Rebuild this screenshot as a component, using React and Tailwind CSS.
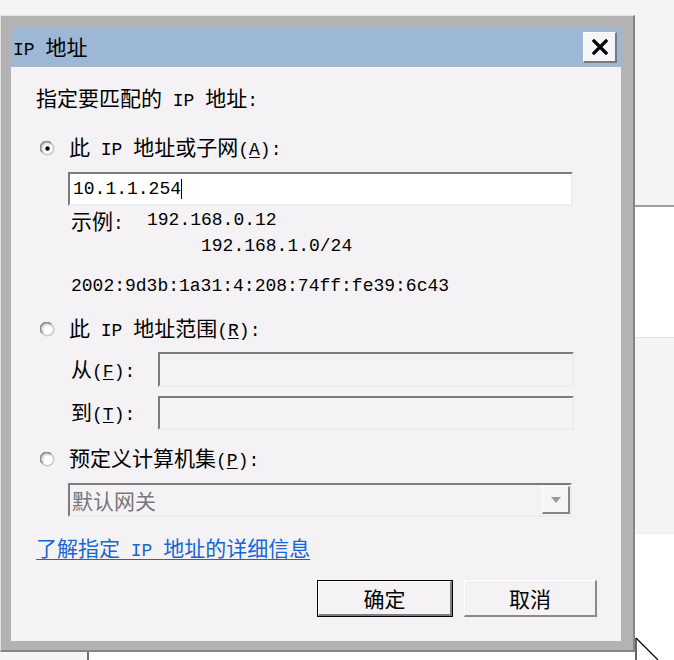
import React from "react";

const isCJK = (ch) => /[\u3000-\u9fff\uff00-\uffef]/.test(ch);

// split a string into CJK / latin runs so each gets the right face and size
const Txt = ({ children }) => {
  const runs = [];
  for (const ch of String(children)) {
    const cjk = isCJK(ch);
    const last = runs[runs.length - 1];
    if (last && last.cjk === cjk) last.s += ch;
    else runs.push({ cjk, s: ch });
  }
  return (
    <>
      {runs.map((r, i) =>
        r.cjk ? (
          <span key={i} className="font-['Noto_Sans_CJK_SC',sans-serif] text-[21px]">
            {r.s}
          </span>
        ) : (
          <span key={i} className="font-['Liberation_Mono',monospace] text-[18px] whitespace-pre">
            {r.s}
          </span>
        )
      )}
    </>
  );
};

const Label = ({ text, k }) => (
  <span className="leading-[24px] text-black">
    <Txt>{text + "("}</Txt>
    <span className="underline underline-offset-2 font-['Liberation_Mono',monospace] text-[18px]">{k}</span>
    <Txt>{"):"}</Txt>
  </span>
);

const Radio = ({ checked }) => (
  <svg width="15" height="15" viewBox="0 0 15 15" className="shrink-0">
    <circle cx="7.5" cy="7.5" r="6.2" fill="#ffffff" stroke="#c9c9c9" strokeWidth="1.6" />
    <path d="M2.2 11.2 A6.2 6.2 0 0 1 11.2 2.2" fill="none" stroke="#8f8f8f" strokeWidth="1.6" />
    <path d="M3.6 10 A4.6 4.6 0 0 1 10 3.6" fill="none" stroke="#d6d6d6" strokeWidth="1" />
    {checked && <circle cx="7.5" cy="7.5" r="2.2" fill="#000000" />}
  </svg>
);

const RadioRow = ({ checked, text, k }) => (
  <div className="flex items-center h-[24px]">
    <div className="ml-[4px] mr-[14px] flex">
      <Radio checked={checked} />
    </div>
    <Label text={text} k={k} />
  </div>
);

const sunken =
  "border-2 border-t-[#7c7c7c] border-l-[#7c7c7c] border-r-[#ededed] border-b-[#ededed]";

export default function App() {
  return (
    <div className="relative w-[674px] h-[660px] overflow-hidden bg-[#f6f3f6]">
      {/* windows behind the dialog */}
      <div className="flex flex-col h-full">
        <div className="flex h-[652px]">
          <div className="w-[635px]"></div>
          <div className="flex-1 flex flex-col">
            <div className="h-[205px]"></div>
            <div className="h-[132px] bg-white border-t-2 border-t-[#9c9c9c]"></div>
            <div className="h-[196px] border-t border-t-[#e4e4e4]"></div>
            <div className="flex-1 bg-white border-t border-t-[#ececec]"></div>
          </div>
        </div>
        <div className="flex flex-1">
          <div className="w-[87px]"></div>
          <div className="flex-1 bg-white border-l-2 border-l-[#6f6f6f]"></div>
        </div>
      </div>

      {/* dialog */}
      <div className="absolute left-0 top-[15px] w-[635px] h-[637px] flex flex-col bg-[#b3b3b3] border-t border-t-[#e6e6e6] border-l border-l-[#e2e2e2] border-r-2 border-r-[#858585] border-b-2 border-b-[#858585] pt-[12px] pl-[10px] pr-[12px] pb-[9px]">
        <div className="h-[39px] bg-[#9db7d6] flex items-start justify-between pl-[2px] pr-[4px] pt-[4px]">
          <div className="mt-[2px] leading-[24px] text-black">
            <Txt>IP 地址</Txt>
          </div>
          <div className="w-[34px] h-[31px] bg-[#f7f5f7] border-t border-l border-t-white border-l-white border-r-2 border-b-2 border-r-[#7a7a7a] border-b-[#7a7a7a] flex items-center justify-center">
            <svg width="16" height="16" viewBox="0 0 16 16">
              <path d="M2 2 L14 14 M14 2 L2 14" stroke="#000" strokeWidth="3.2" strokeLinecap="square" />
            </svg>
          </div>
        </div>

        <div className="flex-1 bg-[#f5f2f5] flex flex-col pl-[25px] text-black">
          <div className="mt-[18px] h-[24px] leading-[24px]">
            <Txt>指定要匹配的 IP 地址:</Txt>
          </div>

          <div className="mt-[27px]">
            <RadioRow checked text="此 IP 地址或子网" k="A" />
          </div>

          <div className={`mt-[12px] ml-[32px] w-[505px] h-[34px] bg-white ${sunken} flex items-center pl-[3px] leading-[24px]`}>
            <Txt>10.1.1.254</Txt>
            <span className="w-px h-[20px] bg-black"></span>
          </div>

          <div className="mt-[2px] ml-[35px] h-[24px] leading-[24px] flex">
            <span className="w-[76px]">
              <Txt>示例:</Txt>
            </span>
            <Txt>192.168.0.12</Txt>
          </div>
          <div className="mt-[1px] ml-[165px] h-[24px] leading-[24px]">
            <Txt>192.168.1.0/24</Txt>
          </div>
          <div className="mt-[16px] ml-[35px] h-[24px] leading-[24px]">
            <Txt>2002:9d3b:1a31:4:208:74ff:fe39:6c43</Txt>
          </div>

          <div className="mt-[20px]">
            <RadioRow text="此 IP 地址范围" k="R" />
          </div>

          <div className="mt-[11px] ml-[35px] flex items-center">
            <span className="w-[87px]">
              <Label text="从" k="F" />
            </span>
            <div className={`w-[416px] h-[35px] ${sunken}`}></div>
          </div>
          <div className="mt-[9px] ml-[35px] flex items-center">
            <span className="w-[87px]">
              <Label text="到" k="T" />
            </span>
            <div className={`w-[416px] h-[34px] ${sunken}`}></div>
          </div>

          <div className="mt-[17px]">
            <RadioRow text="预定义计算机集" k="P" />
          </div>

          <div className={`mt-[12px] ml-[32px] w-[504px] h-[34px] ${sunken} flex items-center justify-between pl-[2px] pr-0`}>
            <span className="leading-[24px] text-[#777777] mt-[2px]">
              <Txt>默认网关</Txt>
            </span>
            <div className="w-[28px] h-[28px] bg-[#f6f4f6] border-t border-l border-t-white border-l-white border-r-2 border-b-2 border-r-[#858585] border-b-[#858585] flex items-center justify-center">
              <svg width="12" height="8" viewBox="0 0 12 8">
                <path d="M1 1 L11 1 L6 7 Z" fill="#9a9a9a" />
              </svg>
            </div>
          </div>

          <div className="mt-[18px] h-[24px] leading-[24px] text-[#1666d4] underline underline-offset-[3px] decoration-[#1666d4]">
            <Txt>了解指定 IP 地址的详细信息</Txt>
          </div>

          <div className="mt-[21px] ml-[281px] flex gap-[11px]">
            <button className="w-[136px] h-[37px] border border-black bg-[#f5f2f5] flex">
              <span className="flex-1 flex items-center justify-center border-t border-l border-t-white border-l-white border-r-2 border-b-2 border-r-[#7d7d7d] border-b-[#7d7d7d] leading-[24px]">
                <Txt>确定</Txt>
              </span>
            </button>
            <button className="w-[133px] h-[37px] bg-[#f5f2f5] flex items-center justify-center border-t border-l border-t-white border-l-white border-r-2 border-b-2 border-r-[#8a8a8a] border-b-[#8a8a8a] leading-[24px]">
              <Txt>取消</Txt>
            </button>
          </div>
        </div>
      </div>

      {/* mouse pointer */}
      <svg className="absolute left-[635px] top-[637px]" width="26" height="26" viewBox="0 0 26 26">
        <path d="M1 1 L1 25 L23 23 Z" fill="#ffffff" />
        <path d="M1 1 L23 23" stroke="#000" strokeWidth="1.2" fill="none" />
        <path d="M1 1 L1 25" stroke="#000" strokeWidth="1.2" fill="none" />
      </svg>
    </div>
  );
}
